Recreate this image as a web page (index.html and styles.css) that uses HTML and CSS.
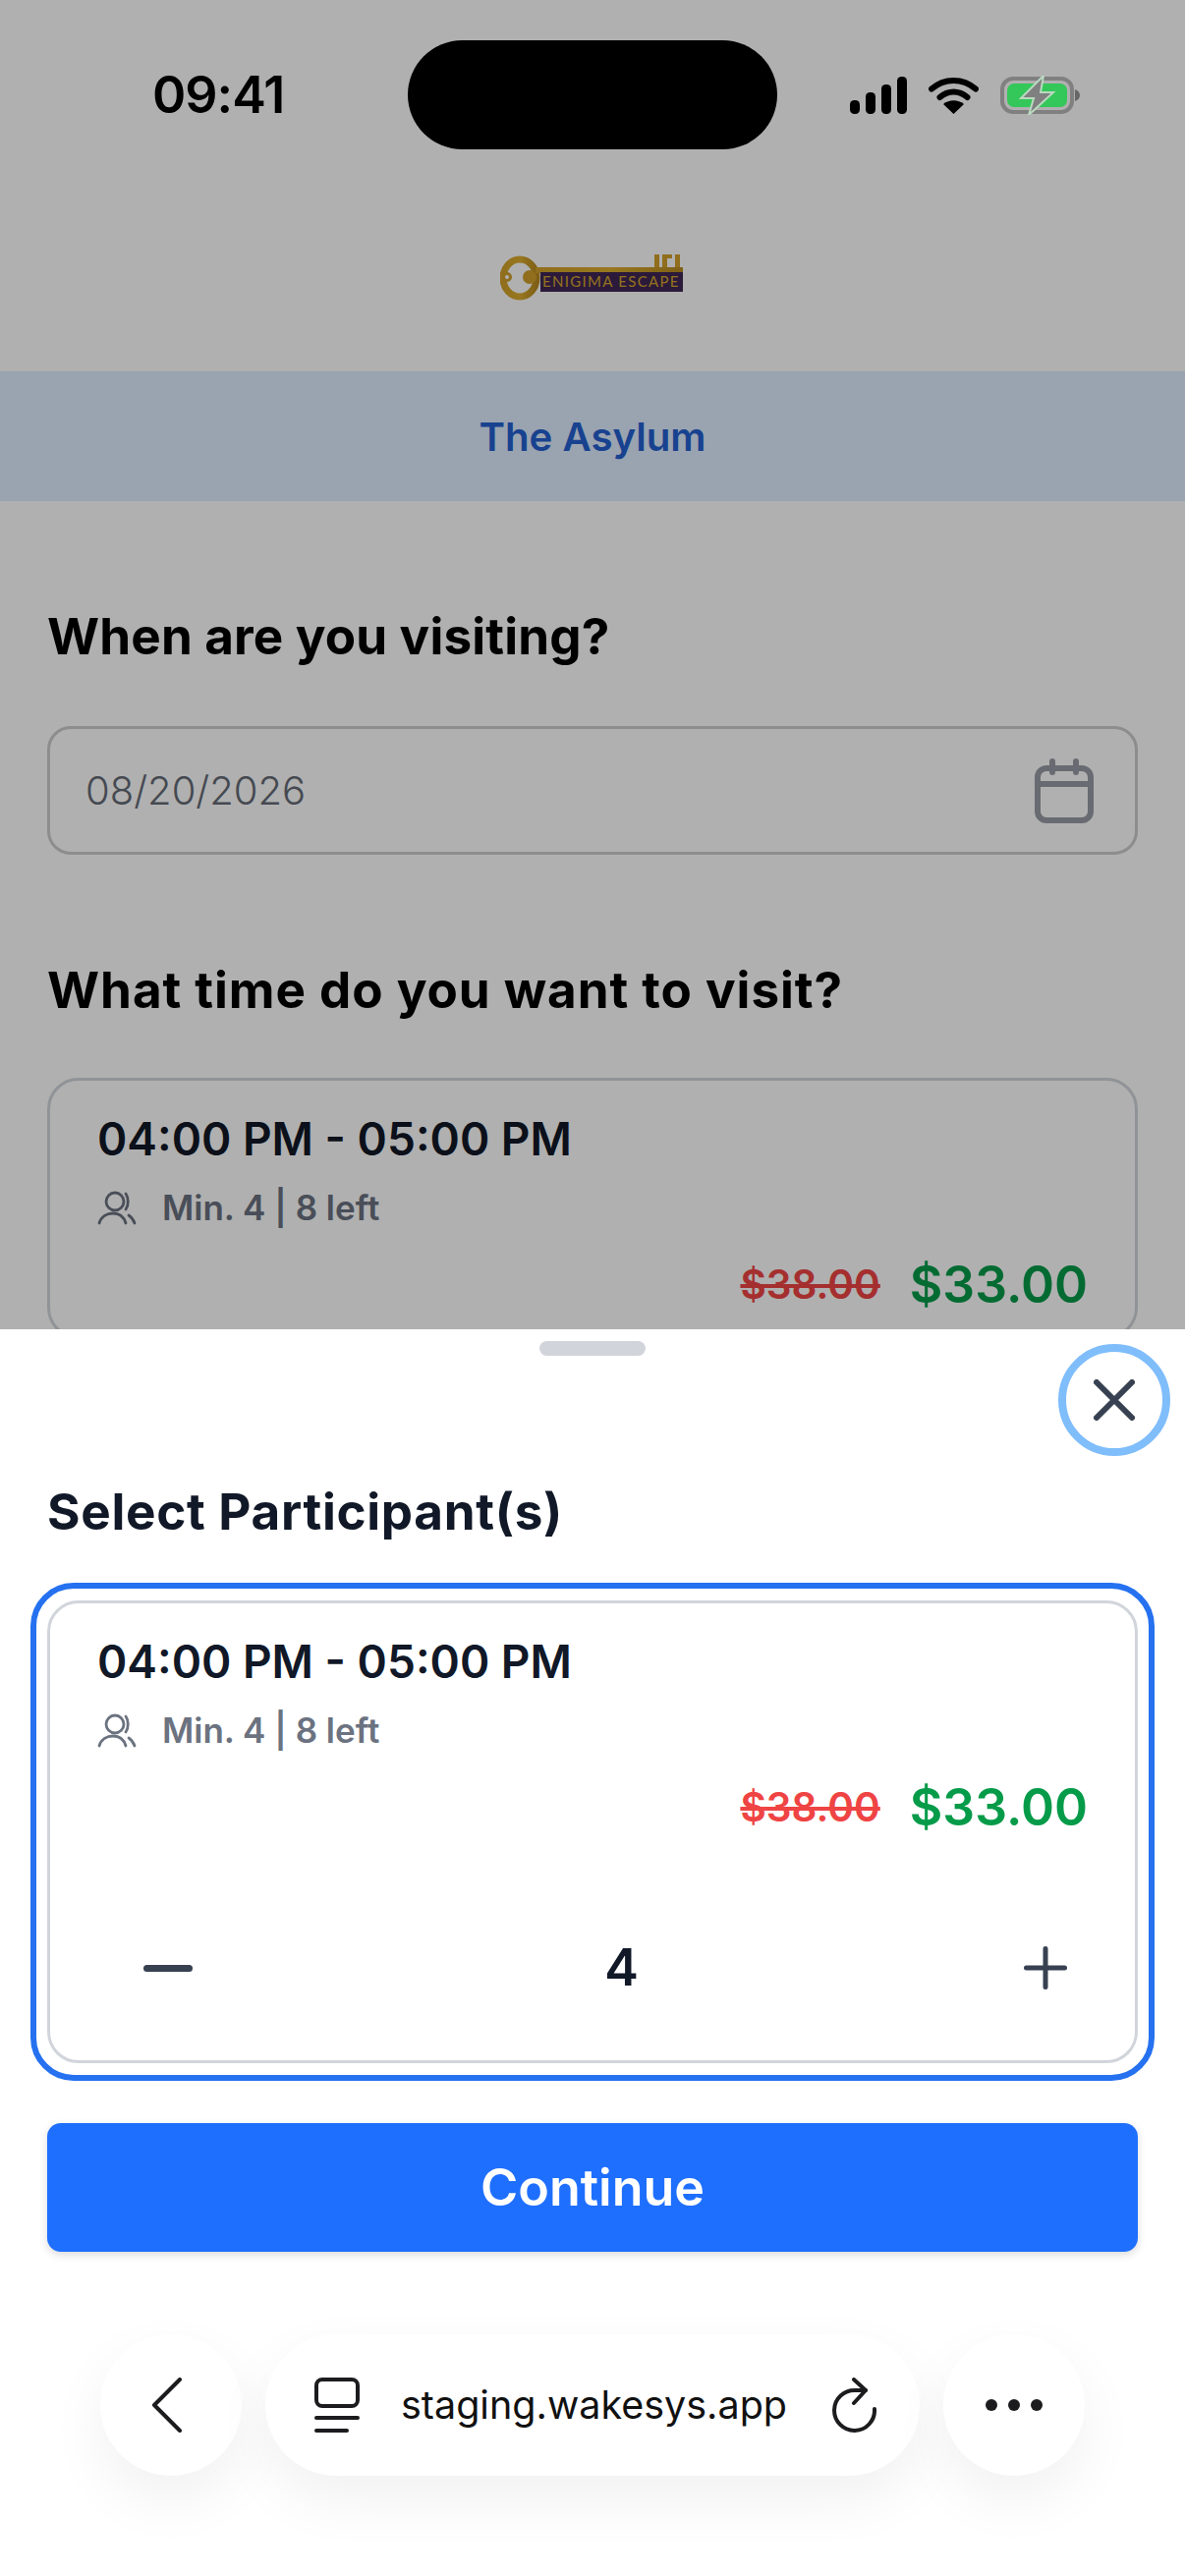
FILE: index.html
```html
<!DOCTYPE html>
<html lang="en">
<head>
<meta charset="utf-8">
<title>The Asylum</title>
<link rel="stylesheet" href="styles.css">
</head>
<body>
<div class="page">
  <header class="status">
    <span class="clock">09:41</span>
    <span class="island"></span>
    <span class="status-icons">
      <svg class="sig" viewBox="0 0 58 38"><rect x="0" y="24" width="10" height="14" rx="4.5"/><rect x="16" y="16" width="10" height="22" rx="4.5"/><rect x="32" y="8" width="10" height="30" rx="4.5"/><rect x="48" y="0" width="10" height="38" rx="4.5"/></svg>
      <svg class="wifi" viewBox="0 0 51 38"><path d="M3 12.500C16 1 35 1 48 12.500" fill="none" stroke="#000" stroke-width="6" stroke-linecap="round"/><path d="M11.500 21C20 13.500 31 13.500 39.500 21" fill="none" stroke="#000" stroke-width="6" stroke-linecap="round"/><path d="M25.500 38L15 28C21 23 30 23 36 28Z"/></svg>
      <svg class="batt" viewBox="0 0 82 40"><rect x="2" y="3" width="71" height="34" rx="11" fill="none" stroke="#808080" stroke-width="4"/><rect x="7" y="8" width="61" height="24" rx="7" fill="#34c759"/><path d="M76 14C79 15 81 17 81 20C81 23 79 25 76 26Z" fill="#666"/><path d="M44 0L21 23H34L29 40L54 17H41Z" fill="#808080" stroke="#b9d9c0" stroke-width="2"/></svg>
    </span>
  </header>

  <div class="logo-row">
    <svg class="logo" viewBox="0 0 186 48">
      <defs><linearGradient id="gold" x1="0" x2="1" y1="0" y2="0"><stop offset="0" stop-color="#d1a02a"/><stop offset=".5" stop-color="#dcae2e"/><stop offset="1" stop-color="#b88a20"/></linearGradient></defs>
      <ellipse cx="20" cy="25" rx="17" ry="19" fill="#fff" stroke="url(#gold)" stroke-width="7"/>
      <circle cx="7" cy="24" r="5" fill="#d1a02a"/><circle cx="7" cy="24" r="2" fill="#fff"/>
      <circle cx="30" cy="24" r="7" fill="#d1a02a"/>
      <rect x="36" y="14" width="150" height="6" fill="url(#gold)"/>
      <path d="M157 14V1H162V14ZM165 14V1H175V5H170V14ZM178 14V1H183V14Z" fill="#d1a02a"/>
      <rect x="41" y="19" width="145" height="20" fill="#402654"/>
      <text x="43" y="34" class="logo-text">ENIGIMA ESCAPE</text>
    </svg>
  </div>

  <div class="banner">The Asylum</div>

  <main class="content">
    <h2 class="heading heading-date">When are you visiting?</h2>
    <div class="date-field">
      <span>08/20/2026</span>
      <svg class="cal" viewBox="0 0 60 66" fill="none" stroke="#989ca5" stroke-width="6" stroke-linecap="round"><rect x="3" y="10" width="54" height="53" rx="9"/><path d="M3 26H57M18 3V14M42 3V14"/></svg>
    </div>
    <h2 class="heading heading-time">What time do you want to visit?</h2>
    <div class="slot slot-back">
      <div class="slot-time">04:00 PM - 05:00 PM</div>
      <div class="slot-meta">
        <svg class="users" viewBox="0 0 40 35" fill="none" stroke="currentColor" stroke-width="2.800" stroke-linecap="round"><circle cx="18" cy="11" r="9"/><path d="M29 3C32 7 32 15 29 19M2 33C4 26 10 23 16 23C22 23 27 26 29 33M32 25C35 27 37 30 38 33"/></svg>
        <span>Min. 4 | 8 left</span>
      </div>
      <div class="prices"><s class="old">$38.00</s><span class="new">$33.00</span></div>
    </div>
  </main>

  <div class="scrim"></div>

  <section class="sheet">
    <div class="handle"></div>
    <button class="close" aria-label="Close"><svg viewBox="0 0 42 42" fill="none" stroke="#374151" stroke-width="6" stroke-linecap="round"><path d="M3 3L39 39M39 3L3 39"/></svg></button>
    <h2 class="sheet-title">Select Participant(s)</h2>
    <div class="selected">
      <div class="slot">
        <div class="slot-time">04:00 PM - 05:00 PM</div>
        <div class="slot-meta">
          <svg class="users" viewBox="0 0 40 35" fill="none" stroke="currentColor" stroke-width="2.800" stroke-linecap="round"><circle cx="18" cy="11" r="9"/><path d="M29 3C32 7 32 15 29 19M2 33C4 26 10 23 16 23C22 23 27 26 29 33M32 25C35 27 37 30 38 33"/></svg>
          <span>Min. 4 | 8 left</span>
        </div>
        <div class="prices"><s class="old">$38.00</s><span class="new">$33.00</span></div>
        <div class="stepper">
          <svg class="step-minus" viewBox="0 0 50 7"><rect width="50" height="7" rx="3.500" fill="#374151"/></svg>
          <span class="count">4</span>
          <svg class="step-plus" viewBox="0 0 44 44" fill="none" stroke="#374151" stroke-width="5" stroke-linecap="round"><path d="M22 2.500V41.500M2.500 22H41.500"/></svg>
        </div>
      </div>
    </div>
    <button class="continue">Continue</button>
    <nav class="toolbar">
      <span class="round"><svg class="chev" viewBox="0 0 32 56" fill="none" stroke="#1c1c1e" stroke-width="4" stroke-linecap="round" stroke-linejoin="round"><path d="M29 2L3 28L29 54"/></svg></span>
      <span class="url">
        <svg class="tabs" viewBox="0 0 46 56" fill="none" stroke="#1c1c1e" stroke-width="4" stroke-linecap="round"><rect x="2" y="2" width="42" height="27" rx="6"/><path d="M2 41H44M2 54H33"/></svg>
        <span class="url-text">staging.wakesys.app</span>
        <svg class="reload" viewBox="0 0 46 56" fill="none" stroke="#1c1c1e" stroke-width="4" stroke-linecap="round" stroke-linejoin="round"><path d="M43 32A20.500 20.500 0 1 1 24 13H34"/><path d="M22 2L34 13L22 26"/></svg>
      </span>
      <span class="round dots"><i></i><i></i><i></i></span>
    </nav>
  </section>
</div>
</body>
</html>
```
FILE: styles.css
```css
* { box-sizing: border-box; }
html, body { margin: 0; padding: 0; background: #fff; }
body { font-family: "Inter", "Liberation Sans", sans-serif; color: #111827; }
.page { position: relative; width: 1206px; height: 2622px; overflow: hidden; background: #fff; }

.status { display: flex; align-items: center; height: 226px; padding: 41px 0 74px 155px; }
.clock { width: 260px; font-family: "Inter", sans-serif; font-size: 52px; font-weight: 600; letter-spacing: -1px; color: #000; }
.island { width: 376px; height: 111px; border-radius: 56px; background: #000; position: relative; z-index: 3; }
.status-icons { display: flex; align-items: center; margin-left: 74px; height: 40px; position: relative; z-index: 3; }
.sig { width: 58px; height: 38px; }
.wifi { width: 51px; height: 38px; margin-left: 22px; }
.batt { width: 82px; height: 40px; margin-left: 22px; }

.logo-row { display: flex; justify-content: center; height: 152px; padding-top: 32px; }
.logo { width: 186px; height: 48px; margin-left: -2px; }
.logo-text { font-family: "Lato", sans-serif; font-size: 15px; letter-spacing: 1.3px; fill: #d6a62c; }

.banner { height: 132px; background: #dfedff; color: #2460cf; font-size: 40.2px; font-weight: 600; display: flex; align-items: center; justify-content: center; }

.content { padding: 0 48px; }
.heading { margin: 0; padding-top: 105px; font-size: 51.2px; line-height: 64px; font-weight: 700; color: #000; }
.heading-date { letter-spacing: .15px; }
.date-field { display: flex; align-items: center; justify-content: space-between; height: 131px; margin-top: 60px; padding: 0 42px 0 36px; border: 3px solid #ccc; border-radius: 24px; font-size: 40px; font-weight: 300; color: #646b76; }
.cal { width: 60px; height: 66px; }
.heading-time { letter-spacing: .95px; }
.slot { border: 3px solid #d1d5db; border-radius: 32px; padding: 27px 48px 0 48px; background: #fff; }
.slot-back { margin-top: 58px; height: 266px; }
.slot-time { font-size: 46px; line-height: 64px; font-weight: 600; color: #111827; }
.slot-meta { display: flex; align-items: center; gap: 26px; margin-top: 16px; font-size: 35px; line-height: 44px; font-weight: 600; color: #6b7280; }
.users { width: 40px; height: 35px; }
.prices { display: flex; justify-content: flex-end; align-items: center; gap: 30px; margin-top: 25px; }
.old { font-size: 40.5px; font-weight: 600; color: #ef4444; }
.new { font-size: 51.6px; font-weight: 600; color: #059b49; }

.scrim { position: absolute; inset: 0; background: rgba(0,0,0,.31); z-index: 1; }

.sheet { position: absolute; left: 0; right: 0; top: 1353px; bottom: 0; background: #fff; z-index: 2; padding: 12px 48px 0; display: flex; flex-direction: column; }
.handle { width: 108px; height: 15px; border-radius: 8px; background: #d1d5db; align-self: center; }
.close { position: absolute; right: 15px; top: 15px; width: 114px; height: 114px; border-radius: 50%; border: 8px solid #7fbdfb; background: #fff; padding: 0; display: flex; align-items: center; justify-content: center; }
.close svg { width: 42px; height: 42px; }
.sheet-title { margin: 126px 0 0; font-size: 51.2px; line-height: 64px; font-weight: 700; letter-spacing: .7px; color: #111827; }
.selected { margin: 41px -17px 0; padding: 12px 11px; border: 6px solid #2571f0; border-radius: 44px; height: 507px; }
.selected .slot { height: 100%; }
.stepper { display: flex; align-items: center; justify-content: space-between; margin: 101px -48px 0; padding: 0 69px 0 95px; }
.step-minus { width: 50px; height: 7px; }
.step-plus { width: 44px; height: 44px; }
.count { font-size: 52px; font-weight: 600; color: #111827; line-height: 64px; margin-left: 27px; }
.continue { height: 131px; margin-top: 43px; border: 0; border-radius: 14px; background: #1f6fff; color: #fff; font: 600 52px "Inter", sans-serif; box-shadow: 0 3px 8px rgba(0,0,0,.15); }

.toolbar { display: flex; gap: 24px; margin: 84px 54px 0; }
.round, .url { height: 144px; background: #fff; display: flex; align-items: center; box-shadow: 0 24px 60px rgba(0,0,0,.06); }
.round { width: 144px; border-radius: 50%; justify-content: center; flex: none; }
.url { flex: 1; border-radius: 72px; padding-left: 50px; }
.chev { width: 32px; height: 56px; margin-left: -8px; }
.tabs { width: 46px; height: 56px; }
.url-text { margin-left: 42px; font-size: 39.5px; color: #111; width: 439px; }
.reload { width: 46px; height: 56px; }
.dots { gap: 11px; }
.dots i { width: 12px; height: 12px; border-radius: 50%; background: #1c1c1e; }
```
